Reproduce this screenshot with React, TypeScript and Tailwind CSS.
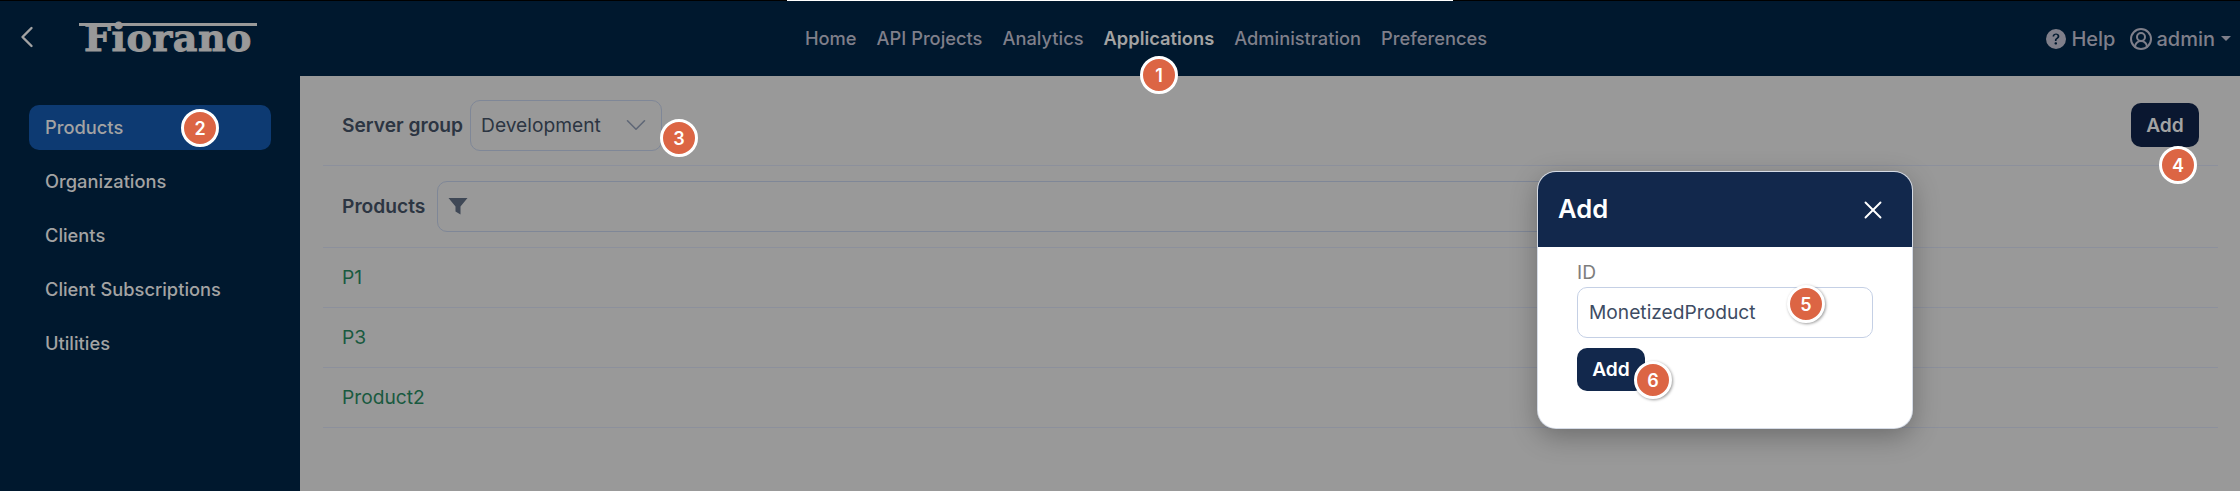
import React from "react";
import { ChevronDown, ChevronLeft, CircleUserRound, X } from "lucide-react";
import { BsQuestionCircleFill } from "react-icons/bs";

const navItems = ["Home", "API Projects", "Analytics", "Applications", "Administration", "Preferences"];
const sideItems = ["Products", "Organizations", "Clients", "Client Subscriptions", "Utilities"];
const products = ["P1", "P3", "Product2"];

const Badge: React.FC<{ n: number; className: string }> = ({ n, className }) => (
  <div
    className={`absolute flex h-[38px] w-[38px] items-center justify-center rounded-full border-[3px] border-white bg-[#dc6544] text-[18px] font-semibold text-white ${className}`}
  >
    {n}
  </div>
);

const App: React.FC = () => {
  return (
    <div className="relative h-[491px] w-[2240px] overflow-hidden bg-[#999999] font-['Inter',sans-serif]">
      <div className="flex h-px bg-black pl-[787px]">
        <div className="h-px w-[666px] bg-white" />
      </div>

      <header className="relative flex h-[75px] items-center justify-center bg-[#00182e] pl-[52px] text-[18.3px] font-medium text-[#7f7f8a]">
        <button className="absolute left-[9px] top-[18px] text-[#a3a3a3]">
          <ChevronLeft size={36} strokeWidth={1.6} />
        </button>
        <div className="absolute left-[79px] top-[22px] flex w-[178px] flex-col items-center text-[#999999]">
          <div className="h-[3px] w-full bg-[#999999]" />
          <span className="mt-[-7px] font-['DejaVu_Serif',serif] text-[38px] font-bold leading-[38px] tracking-[0.5px] [-webkit-text-stroke:1px_#999999]">
            Fiorano
          </span>
        </div>
        <nav className="flex gap-5">
          {navItems.map((item) => (
            <span key={item} className={item === "Applications" ? "font-semibold text-[#a3a3a3]" : ""}>
              {item}
            </span>
          ))}
        </nav>
        <div className="absolute right-[9px] top-0 flex h-full items-center text-[20px]">
          <BsQuestionCircleFill size={20} className="mr-[5px]" />
          <span>Help</span>
          <CircleUserRound size={24} strokeWidth={2} className="ml-[14px] mr-[3px]" />
          <span>admin</span>
          <span className="ml-[6px] h-0 w-0 border-x-[5px] border-t-[5px] border-x-transparent border-t-[#7f7f8a]" />
        </div>
      </header>

      <div className="flex h-[415px]">
        <aside className="w-[300px] bg-[#00182e] px-[29px] pt-[29px] text-[18.3px] font-medium text-[#a3a3a3]">
          {sideItems.map((item, i) => (
            <div
              key={item}
              className={`mb-[9px] flex h-[45px] items-center rounded-[10px] px-[16px] ${i === 0 ? "bg-[#0d3a72]" : ""}`}
            >
              {item}
            </div>
          ))}
        </aside>

        <main className="flex-1 pl-[23px] pr-[22px] text-[19.2px] text-[#2c3542]">
          <div className="flex h-[90px] items-center justify-between border-b border-[#8c909c] pl-[19px] pr-[19px] pt-[9px]">
            <div className="flex items-center gap-[7px]">
              <span className="font-semibold">Server group</span>
              <div className="flex h-[51px] w-[192px] items-center justify-between rounded-[10px] border border-[#7f8797] pl-[10px] pr-[8px]">
                <span>Development</span>
                <ChevronDown size={34} strokeWidth={1.1} className="text-[#5f6776]" />
              </div>
            </div>
            <button className="h-[44px] w-[68px] rounded-[10px] bg-[#0a1730] font-semibold text-[#a3a3a3]">
              Add
            </button>
          </div>
          <div className="flex h-[82px] items-center gap-[12px] border-b border-[#8c909c] pl-[19px]">
            <span className="font-semibold">Products</span>
            <div className="flex h-[51px] w-[1160px] items-center rounded-[10px] border border-[#7f8797] pl-[10px]">
              <svg width="20" height="17" viewBox="0 0 20 17" className="fill-[#3f4856]">
                <path d="M0.5 0H19.5L12.5 8.5V16.5L7.5 13.5V8.5Z" />
              </svg>
            </div>
          </div>
          {products.map((p) => (
            <div key={p} className="flex h-[60px] items-center border-b border-[#8c909c] pl-[19px] text-[#195a40]">
              {p}
            </div>
          ))}
        </main>
      </div>

      <div className="absolute left-[1538px] top-[172px] h-[256px] w-[374px] overflow-hidden rounded-[18px] bg-white shadow-[0_8px_28px_rgba(0,0,0,0.3)] ring-1 ring-[#d5dbe6]">
        <div className="flex h-[75px] items-center justify-between bg-[#12284c] pl-[20px] pr-[24px] text-white">
          <span className="text-[25.6px] font-semibold">Add</span>
          <X size={30} strokeWidth={1.5} />
        </div>
        <div className="px-[39px] pt-[13px]">
          <label className="block text-[19.2px] leading-[24px] text-[#7d7d7d]">ID</label>
          <div className="mt-[3px] flex h-[51px] w-[296px] items-center rounded-[10px] border border-[#c5d0e5] pl-[11px] text-[19.2px] text-[#3e4c63]">
            MonetizedProduct
          </div>
          <button className="mt-[10px] h-[43px] w-[68px] rounded-[10px] bg-[#12284c] text-[19.2px] font-semibold text-white">
            Add
          </button>
        </div>
      </div>

      <Badge n={1} className="left-[1140px] top-[56px]" />
      <Badge n={2} className="left-[181px] top-[109px]" />
      <Badge n={3} className="left-[660px] top-[119px]" />
      <Badge n={4} className="left-[2159px] top-[146px]" />
      <Badge n={5} className="left-[1787px] top-[285px] shadow-[1px_1px_3px_rgba(0,0,0,0.4)]" />
      <Badge n={6} className="left-[1634px] top-[361px] shadow-[1px_1px_3px_rgba(0,0,0,0.4)]" />
    </div>
  );
};

export default App;
